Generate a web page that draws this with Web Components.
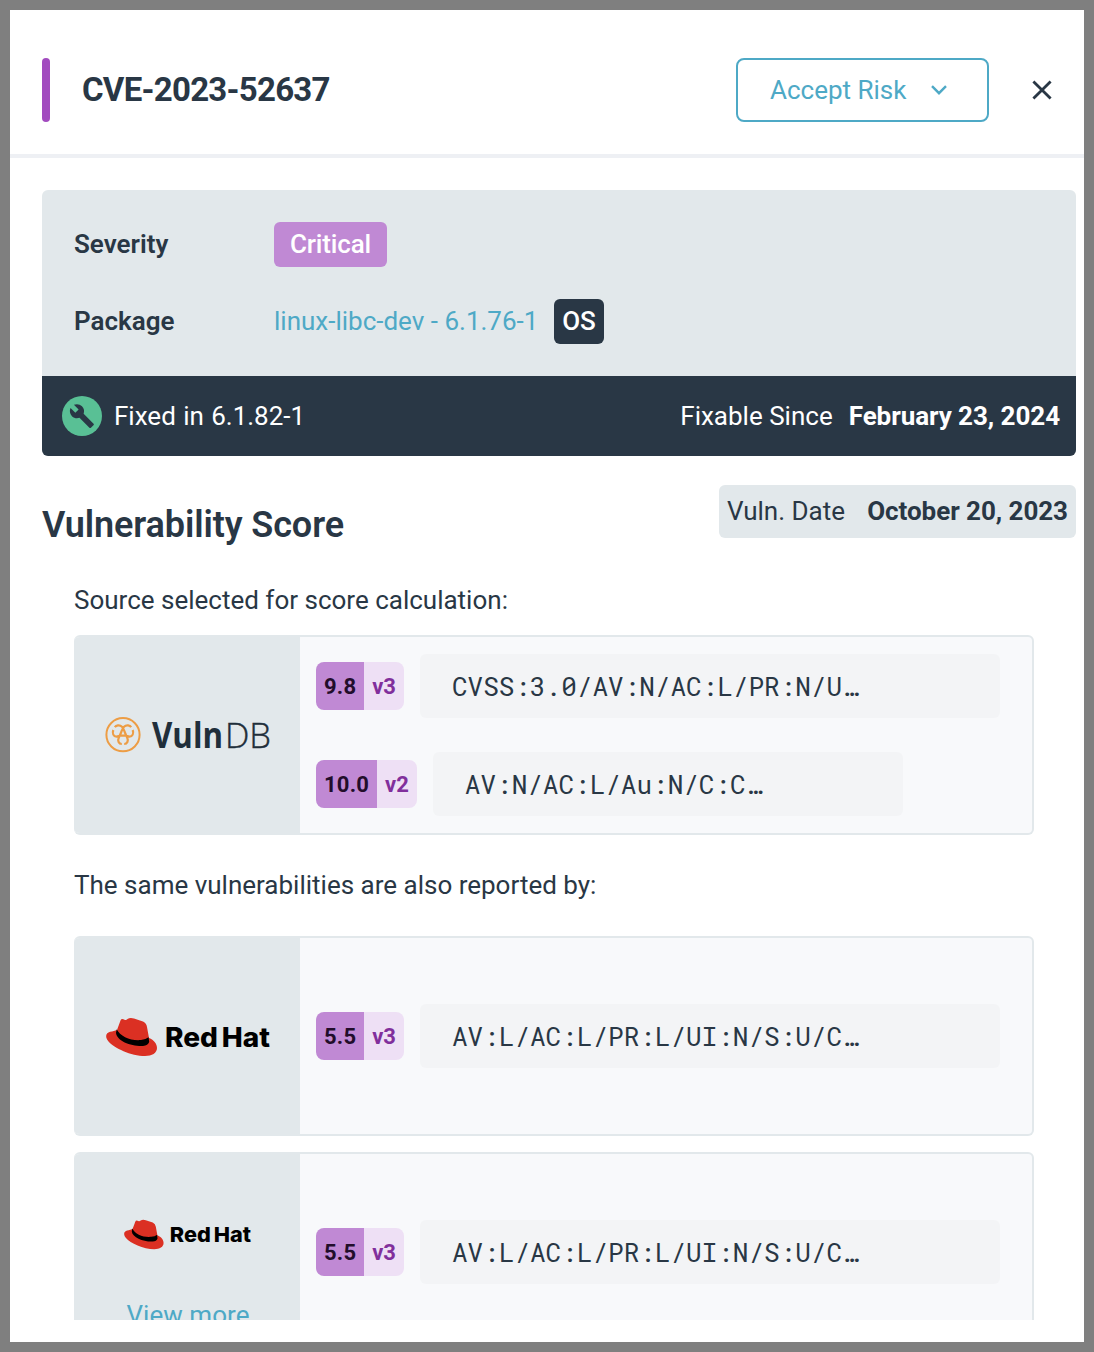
<!DOCTYPE html>
<html lang="en">
<head>
<meta charset="utf-8">
<title>CVE-2023-52637</title>
<style>
html,body{margin:0;height:100%}
body{background:#7f7f7f;font-family:Roboto,"Liberation Sans",sans-serif;color:#293745;font-size:26px;overflow:hidden}
</style>
</head>
<body>
<vuln-drawer>
  <drawer-header slot="header">CVE-2023-52637</drawer-header>
  <package-summary></package-summary>
  <score-heading></score-heading>
  <source-note style="--pt:35px;--pb:17px">Source selected for score calculation:</source-note>
  <source-card>
    <vulndb-logo slot="logo"></vulndb-logo>
    <score-row score="9.8" version="v3" w="580">CVSS:3.0/AV:N/AC:L/PR:N/U…</score-row>
    <score-row score="10.0" version="v2" w="470">AV:N/AC:L/Au:N/C:C…</score-row>
  </source-card>
  <source-note style="--pt:32px;--pb:33px">The same vulnerabilities are also reported by:</source-note>
  <source-card>
    <redhat-logo slot="logo" style="--w:165px;--mt:2px"></redhat-logo>
    <score-row score="5.5" version="v3" w="580">AV:L/AC:L/PR:L/UI:N/S:U/C…</score-row>
  </source-card>
  <source-card style="margin-top:16px">
    <redhat-logo slot="logo" style="--w:128px;--mt:48px"></redhat-logo>
    <view-more slot="logo">View more</view-more>
    <score-row score="5.5" version="v3" w="580">AV:L/AC:L/PR:L/UI:N/S:U/C…</score-row>
  </source-card>
</vuln-drawer>
<script>
function define(name, html){
  const t=document.createElement('template');
  t.innerHTML=html;
  customElements.define(name,class extends HTMLElement{
    connectedCallback(){
      if(this.shadowRoot)return;
      const r=this.attachShadow({mode:'open'});
      r.append(t.content.cloneNode(true));
      r.querySelectorAll('[data-attr]').forEach(e=>{e.textContent=this.getAttribute(e.dataset.attr)});
      if(this.hasAttribute('w'))this.style.setProperty('--vector-width',this.getAttribute('w')+'px');
    }
  });
}
define('vuln-drawer',`<style>
:host{display:flex;flex-direction:column;box-sizing:border-box;margin:10px;width:1074px;height:1332px;background:#fff}
main{height:1162px;flex:none;overflow:hidden;padding:32px 8px 0 32px;box-sizing:border-box;display:flex;flex-direction:column}
::slotted(*){flex-shrink:0}
</style><slot name="header"></slot><main><slot></slot></main>`);
define('drawer-header',`<style>
:host{display:flex;align-items:center;box-sizing:border-box;height:148px;flex:none;border-bottom:4px solid #eef0f4;padding:0 31px 0 32px}
.mark{width:8px;height:64px;border-radius:4px;background:#a24bbf;margin-top:16px;margin-right:32px}
h1{margin:15px 0 0;font-size:33px;font-weight:700;line-height:40px;letter-spacing:-.74px;flex:1;white-space:nowrap}
button{box-sizing:border-box;width:253px;height:64px;margin-top:16px;border:2px solid #4ea9c6;border-radius:8px;background:#fff;color:#4ea9c6;font:400 26px Roboto,sans-serif;display:flex;align-items:center;padding:0 0 0 32px;gap:25px}
.close{margin:16px 0 0 42px;display:block}
</style><span class="mark"></span><h1><slot></slot></h1>
<button><span>Accept Risk</span><svg width="16" height="10" viewBox="0 0 16 10" fill="none" stroke="currentColor" stroke-width="2.4"><path d="M1 1.2 8 8.2 15 1.2"/></svg></button>
<svg class="close" width="22" height="22" viewBox="0 0 22 22" fill="none" stroke="#293745" stroke-width="2.8"><path d="M2.4 2.4 19.6 19.6M19.6 2.4 2.4 19.6"/></svg>`);
define('package-summary',`<style>
:host{display:block;border-radius:6px;overflow:hidden;background:#e2e8eb}
.info{height:186px;box-sizing:border-box;padding:32px;display:flex;flex-direction:column;gap:32px}
.row{display:flex;align-items:center;height:45px;line-height:45px}
.row b{width:200px;font-weight:600}
.tag{box-sizing:border-box;height:45px;border-radius:6px;text-align:center;color:#fff}
.critical{width:113px;background:#c089d4;font-weight:500;letter-spacing:-.15px}
.os{width:50px;background:#293745;margin-left:16px;font-weight:500;letter-spacing:-.2px}
.row a{color:#4ea9c6;width:264px;white-space:nowrap}
.fix{height:80px;background:#293745;color:#fff;display:flex;align-items:center;padding:0 16px 0 20px}
.fix svg{margin-right:12px}
.fix>span{word-spacing:.9px}
.since{margin-left:auto;display:flex;gap:16px}
.since b{font-weight:700;letter-spacing:-.06px}
</style><div class="info"><div class="row"><b>Severity</b><span class="tag critical">Critical</span></div>
<div class="row"><b>Package</b><a>linux-libc-dev - 6.1.76-1</a><span class="tag os">OS</span></div></div>
<div class="fix"><svg width="40" height="40" viewBox="0 0 40 40"><circle cx="20" cy="20" r="20" fill="#59c095"/><path transform="translate(6.8 7) scale(1.09)" fill="#293745" d="M22.7 19l-9.1-9.1c.9-2.3.4-5-1.5-6.9-2-2-5-2.4-7.4-1.3L9 6 6 9 1.6 4.7C.4 7.1.9 10.1 2.9 12.1c1.9 1.9 4.6 2.4 6.9 1.5l9.1 9.1c.4.4 1 .4 1.4 0l2.3-2.3c.5-.4.5-1.1.1-1.4z"/></svg>
<span>Fixed in 6.1.82-1</span><div class="since"><span>Fixable Since</span><b>February 23, 2024</b></div></div>`);
define('score-heading',`<style>
:host{display:flex;justify-content:space-between;align-items:flex-start;margin-top:29px}
h2{margin:18px 0 0;font-size:36px;line-height:44px;font-weight:600;letter-spacing:-.1px;white-space:nowrap}
div{display:flex;justify-content:space-between;align-items:center;box-sizing:border-box;width:357px;height:53px;line-height:52px;padding:0 8px 1px;background:#e2e8eb;border-radius:6px;white-space:nowrap}
b{font-weight:700;letter-spacing:-.05px}
</style><h2>Vulnerability Score</h2><div><span>Vuln. Date</span><b>October 20, 2023</b></div>`);
define('source-note',`<style>
:host{display:block;padding:var(--pt,32px) 0 var(--pb,18px) 32px;line-height:36px;white-space:nowrap}
</style><slot></slot>`);
define('source-card',`<style>
:host{display:flex;box-sizing:border-box;height:200px;width:960px;margin-left:32px;border:2px solid #e2e8eb;border-left:0;border-radius:6px;background:#f8f9fb;overflow:hidden}
.logo{width:226px;flex:none;background:#e2e8eb;display:flex;flex-direction:column;align-items:center;justify-content:center}
.scores{flex:1;padding-left:16px;display:flex;flex-direction:column;justify-content:center;gap:34px}
</style><div class="logo"><slot name="logo"></slot></div><div class="scores"><slot></slot></div>`);
define('score-row',`<style>
:host{display:flex;align-items:center;gap:16px;height:64px}
.badge{display:flex;height:48px;line-height:50px;border-radius:8px;overflow:hidden;font-size:22px;font-weight:700;flex:none}
.badge span{padding:0 8px;background:#c089d4;color:#220d2b;letter-spacing:.2px}
.badge span+span{background:#eee0f5;color:#812f9c;letter-spacing:0}
code{box-sizing:border-box;width:var(--vector-width);height:64px;line-height:64px;padding-left:32px;border-radius:6px;background:#f3f4f6;font-family:"Roboto Mono","Liberation Mono",monospace;font-size:26px;white-space:nowrap}
</style><div class="badge"><span data-attr="score"></span><span data-attr="version"></span></div><code><slot></slot></code>`);
define('vulndb-logo',`<style>:host{display:block;height:40px;margin-left:2px}svg{display:block;overflow:visible}</style>
<svg width="166" height="40" viewBox="0 0 166 40"><g fill="none" stroke="#ed9d45" stroke-width="2"><circle cx="18" cy="19.700" r="16.6"/>
<path stroke-width="2.2" d="M9.800 12.200C11 10.300 14.500 9.300 17 11.800C18.500 13.300 20 18 22 22.300M26.200 12.200C25 10.300 21.500 9.300 19 11.800C17.500 13.300 16 18 14 22.300M8.300 15C7 18.500 8.500 21.600 11.500 21.600C13 21.600 14 20.800 15.500 20.600H20.500C22 20.800 23 21.600 24.500 21.600C27.500 21.600 29 18.500 27.700 15M14 22C12.200 26 13.800 29 16.800 29M22 22C23.800 26 22.200 29 19.200 29"/></g>
<text x="47" y="33" fill="#202e3a" font-family="Open Sans,sans-serif" font-size="35" font-weight="700" textLength="71" lengthAdjust="spacingAndGlyphs">Vuln</text><text x="120" y="33" fill="#202e3a" stroke="#202e3a" stroke-width=".4" font-family="Open Sans,sans-serif" font-size="35" font-weight="300" textLength="46" lengthAdjust="spacingAndGlyphs">DB</text></svg>`);
define('redhat-logo',`<style>:host{display:block;width:var(--w);margin:var(--mt) 0 0 2px}svg{display:block;width:100%;overflow:visible}</style>
<svg viewBox="0 0 165 40"><path fill="#db3023" d="M11 13L14.500 3.500Q15.500 1 18.500 2.700Q20 3.500 21.500 2Q24 .2 28 1.500L37 4.500Q40.500 6 41 10L43 21C48 23 51 27 51 31C51 36 46 39 39 39C25 39 8 31 2.500 24.500C-2 19 .5 14.800 6 14.500Z"/><path d="M10.700 12.200C14 19.500 25 24 35 23Q40 22.500 42.600 20.300L43.200 25Q42 28.500 37 29C25 29.500 11 24 10 16Z"/><text x="59" y="29.500" textLength="105" lengthAdjust="spacingAndGlyphs" font-family="Inter,sans-serif" font-weight="800" font-size="26.500" word-spacing="-2.200">Red Hat</text></svg>`);
define('view-more',`<style>:host{display:block;color:#4ea9c6;line-height:36px;margin:46px 0 0 2px;letter-spacing:.05px}</style><slot></slot>`);
</script>
</body>
</html>
